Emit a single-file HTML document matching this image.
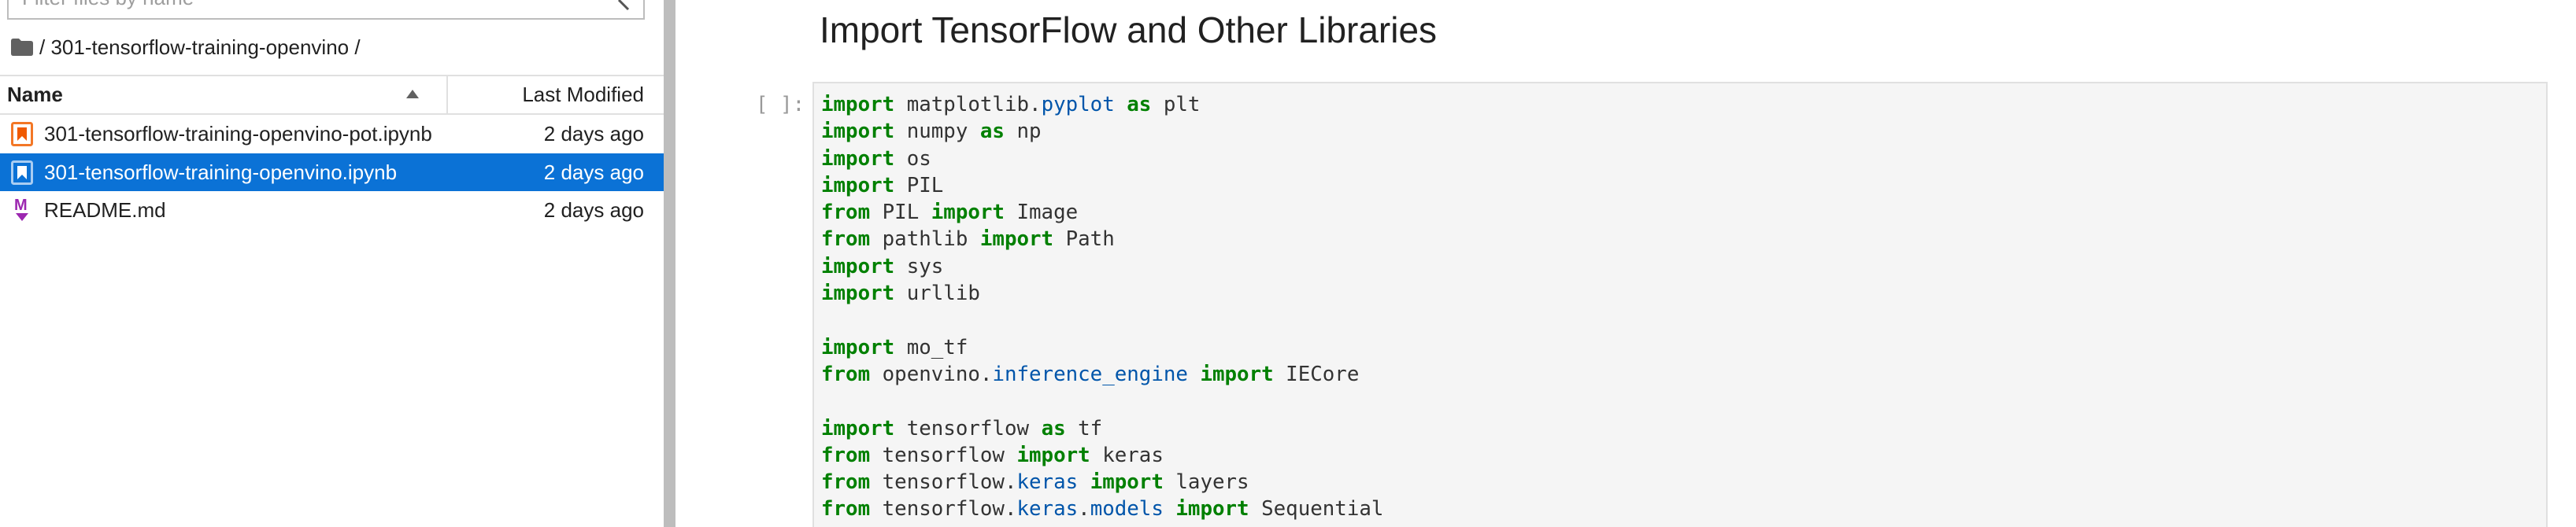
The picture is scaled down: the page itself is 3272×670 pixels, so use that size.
<!DOCTYPE html>
<html style="width:3272px;height:670px;overflow:hidden"><head><meta charset="utf-8"><style>
*{margin:0;padding:0;box-sizing:border-box}
body{width:3272px;height:670px;overflow:hidden;background:#fff;position:relative;font-family:"Liberation Sans",sans-serif;color:#212121}
.a{position:absolute;white-space:pre}
.code{font-family:"DejaVu Sans Mono","Liberation Mono",monospace;font-size:25.8px;color:#333;line-height:34.3px}
.code b{color:#008000;font-weight:bold}
.code i{color:#0055aa;font-style:normal}
.row{position:absolute;left:0;width:843px;height:48px;font-size:26px;line-height:48px}
</style></head><body>
<!-- sidebar -->
<div class="a" style="left:9px;top:-20px;width:810px;height:45px;border:2px solid #bdbdbd;border-top:none"></div>
<div class="a" style="left:28px;top:-18px;font-size:26px;color:#9e9e9e">Filter files by name</div>
<svg class="a" style="left:782px;top:0" width="22" height="16"><path d="M4 0 L16 12" stroke="#555" stroke-width="3"/></svg>
<svg class="a" style="left:14px;top:49px" width="28" height="22"><path d="M0 3 Q0 0 3 0 H10 L13 3 H25 Q28 3 28 6 V19 Q28 22 25 22 H3 Q0 22 0 19Z" fill="#616161"/></svg>
<div class="a" style="left:50px;top:44px;font-size:26px;line-height:32px;color:#212121">/ 301-tensorflow-training-openvino /</div>
<div class="a" style="left:0;top:95px;width:843px;height:2px;background:#e0e0e0"></div>
<div class="a" style="left:0;top:144px;width:843px;height:2px;background:#e0e0e0"></div>
<div class="a" style="left:567px;top:96px;width:2px;height:49px;background:#e0e0e0"></div>
<div class="a" style="left:9px;top:96px;font-size:26px;line-height:49px;font-weight:bold">Name</div>
<svg class="a" style="left:516px;top:114px" width="16" height="11"><path d="M0 11 L8 0 L16 11Z" fill="#616161"/></svg>
<div class="a" style="right:2454px;top:96px;font-size:26px;line-height:49px">Last Modified</div>

<div class="row" style="top:146px">
<svg class="a" style="left:14px;top:9px" width="28" height="31"><rect x="1.5" y="1.5" width="25" height="28" rx="2" fill="none" stroke="#f37726" stroke-width="3"/><path d="M8 7 H20 V24 L14 18 L8 24Z" fill="#f05a00"/></svg>
<span class="a" style="left:56px">301-tensorflow-training-openvino-pot.ipynb</span>
<span class="a" style="right:25px">2 days ago</span></div>
<div class="row" style="top:195px;background:#0b72d6;color:#fff">
<svg class="a" style="left:14px;top:9px" width="28" height="31"><rect x="1.5" y="1.5" width="25" height="28" rx="2" fill="none" stroke="#a9cdf2" stroke-width="3"/><path d="M8 7 H20 V24 L14 18 L8 24Z" fill="#fff"/></svg>
<span class="a" style="left:56px">301-tensorflow-training-openvino.ipynb</span>
<span class="a" style="right:25px">2 days ago</span></div>
<div class="row" style="top:243px">
<span class="a" style="left:18px;top:7px;font-size:20px;font-weight:bold;color:#9c27b0;line-height:22px">M</span>
<svg class="a" style="left:20px;top:28px" width="16" height="10"><path d="M0 0 H16 L8 10Z" fill="#9c27b0"/></svg>
<span class="a" style="left:56px">README.md</span>
<span class="a" style="right:25px">2 days ago</span></div>

<div class="a" style="left:843px;top:0;width:15px;height:670px;background:#bdbdbd"></div>

<!-- notebook -->
<div class="a" style="left:1041px;top:8px;font-size:46px;line-height:60px;color:#212121">Import TensorFlow and Other Libraries</div>
<div class="a code" style="left:960px;top:116px;color:#999">[ ]:</div>
<div class="a" style="left:1032px;top:104px;width:2204px;height:570px;background:#f5f5f5;border:2px solid #e0e0e0;border-bottom:none"></div>
<div class="a code" style="left:1043px;top:116px"><b>import</b> matplotlib.<i>pyplot</i> <b>as</b> plt
<b>import</b> numpy <b>as</b> np
<b>import</b> os
<b>import</b> PIL
<b>from</b> PIL <b>import</b> Image
<b>from</b> pathlib <b>import</b> Path
<b>import</b> sys
<b>import</b> urllib

<b>import</b> mo_tf
<b>from</b> openvino.<i>inference_engine</i> <b>import</b> IECore

<b>import</b> tensorflow <b>as</b> tf
<b>from</b> tensorflow <b>import</b> keras
<b>from</b> tensorflow.<i>keras</i> <b>import</b> layers
<b>from</b> tensorflow.<i>keras</i>.<i>models</i> <b>import</b> Sequential</div>
</body></html>
